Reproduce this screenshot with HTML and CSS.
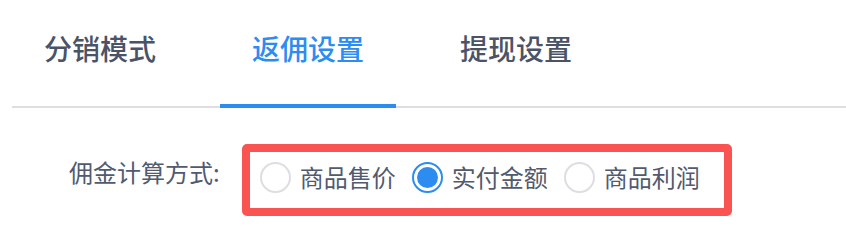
FILE: index.html
```html
<!DOCTYPE html>
<html lang="zh-CN">
<head>
    <meta charset="UTF-8">
    <meta name="viewport" content="width=device-width, initial-scale=1.0">
    <title>返佣设置</title>
    <link rel="stylesheet" href="styles.css">
</head>
<body>
    <div class="tabs">
        <div class="tab">分销模式</div>
        <div class="tab active">返佣设置</div>
        <div class="tab">提现设置</div>
    </div>

    <div class="form-row">
        <div class="form-label">佣金计算方式:</div>
        <div class="radio-group">
            <label class="radio">
                <span class="radio-inner"></span>
                <span class="radio-text">商品售价</span>
            </label>
            <label class="radio checked">
                <span class="radio-inner"></span>
                <span class="radio-text">实付金额</span>
            </label>
            <label class="radio">
                <span class="radio-inner"></span>
                <span class="radio-text">商品利润</span>
            </label>
        </div>
    </div>
</body>
</html>
```

FILE: styles.css
```css
* {
    margin: 0;
    padding: 0;
    box-sizing: border-box;
}

body {
    font-family: "Noto Sans CJK SC", "Noto Sans", sans-serif;
    background: #fff;
    color: #515a6e;
    width: 846px;
    height: 234px;
    overflow: hidden;
}

.tabs {
    display: flex;
    align-items: flex-start;
    gap: 32px;
    margin-left: 12px;
    border-bottom: 2px solid #dcdee2;
}

.tab {
    width: 176px;
    text-align: center;
    font-size: 28px;
    font-weight: 500;
    line-height: 42px;
    padding: 27px 0 37px;
    color: #4b5366;
    cursor: pointer;
}

.tab.active {
    color: #2d8cf0;
    padding-bottom: 35px;
    border-bottom: 4px solid #2d8cf0;
    margin-bottom: -2px;
}

.form-row {
    display: flex;
    align-items: flex-start;
    margin-top: 36px;
    padding-left: 69px;
}

.form-label {
    font-size: 24px;
    line-height: 32px;
    margin-top: 12px;
    margin-right: 22px;
    white-space: nowrap;
}

.radio-group {
    display: flex;
    border: 8px solid #f95352;
    border-radius: 5px;
    padding: 9px 8px 15px 10px;
}

.radio {
    display: flex;
    align-items: center;
    gap: 9px;
    margin-right: 16px;
    font-size: 24px;
    line-height: 32px;
    cursor: pointer;
}

.radio-inner {
    width: 31px;
    height: 31px;
    border: 2px solid #dcdee2;
    border-radius: 50%;
    position: relative;
    flex-shrink: 0;
}

.radio.checked .radio-inner {
    border: 2.5px solid #2d8cf0;
}

.radio.checked .radio-inner::after {
    content: '';
    position: absolute;
    left: 50%;
    top: 50%;
    width: 21px;
    height: 21px;
    margin: -10.5px 0 0 -10.5px;
    border-radius: 50%;
    background: #2d8cf0;
}
```
